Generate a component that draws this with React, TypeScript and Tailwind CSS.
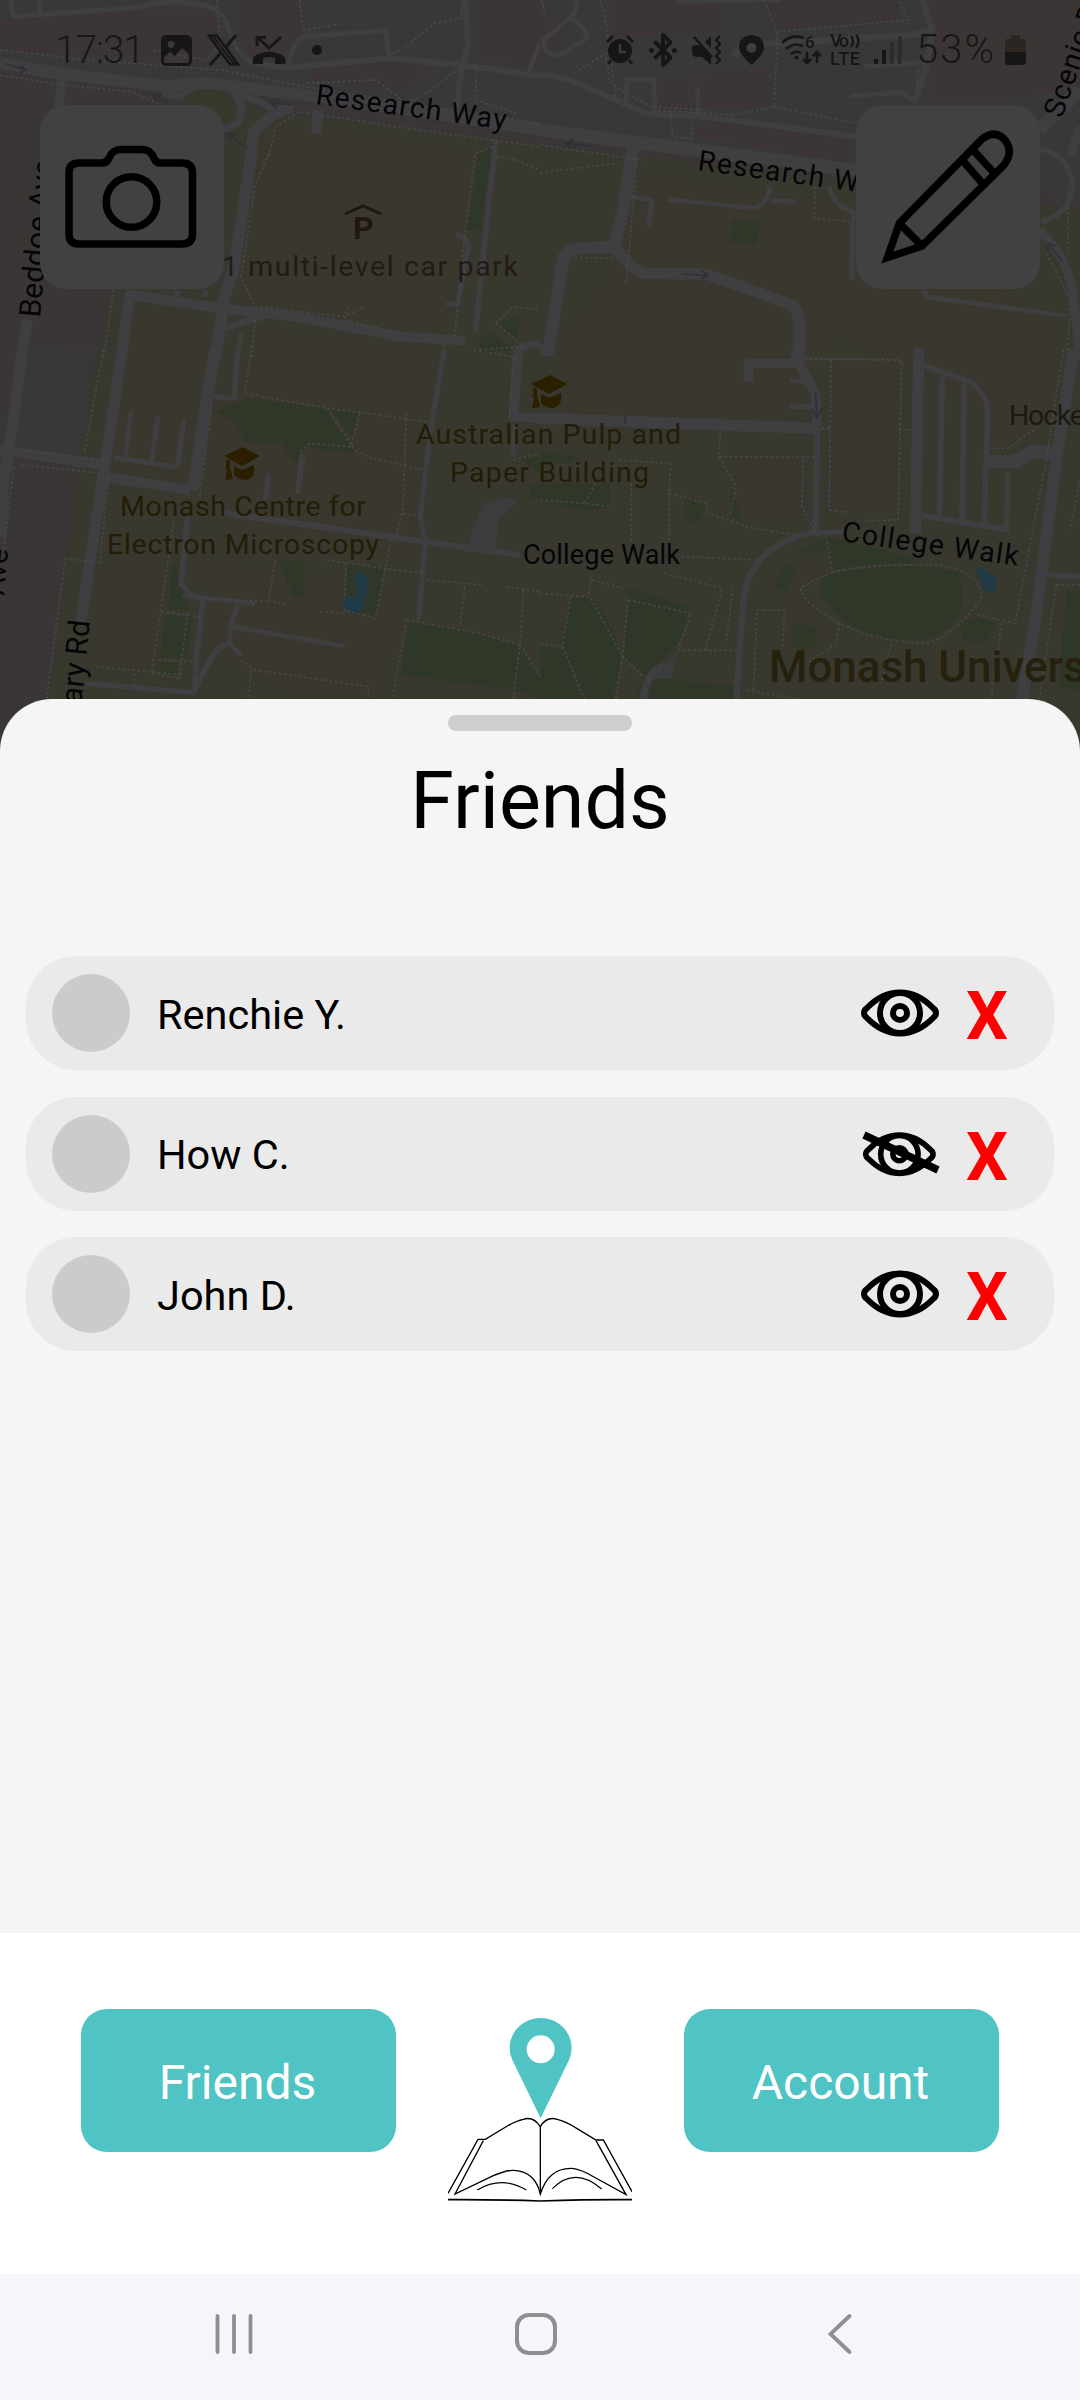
import type { ReactNode } from "react";
import { Bluetooth } from "lucide-react";

type Friend = { name: string; visible: boolean };

const friends: Friend[] = [
  { name: "Renchie Y.", visible: true },
  { name: "How C.", visible: false },
  { name: "John D.", visible: true },
];

type TileData = {
  transform: string;
  brown?: string[];
  green?: string[];
  water?: string[];
  roads: [string, number][];
  paths: string[];
  arrows?: string[];
};

const tiles: TileData[] = [
  {
    transform: "scale(.3444 .3333)",
    brown: [
      "M0 60L230 40V165L0 150z",
      "M230 30L620 30L650 130L560 200L230 160z",
      "M690 0H870L880 90L820 180L740 190L690 100z",
      "M1390 0H1568V200L1390 180z",
      "M900 200L1130 180L1260 200L1180 270L900 240z",
    ],
    green: [
      "M1390 470L1430 430L1395 690L1355 690z",
      "M1390 1020L1430 1000L1490 1050L1400 1058z",
      "M1450 970L1510 950L1500 1020z",
    ],
    roads: [
      ["M30 0L38 50L400 22Q500 -8 600 18Q650 30 665 90Q680 150 720 180", 14],
      ["M115 0V40", 12],
      ["M0 190L180 222L480 258L600 250L920 290L1568 388", 36],
      ["M180 240L170 320", 26],
      ["M470 280Q540 300 550 270Q600 240 660 260Q720 300 690 370Q640 400 600 380", 22],
      ["M850 320Q780 340 735 400L725 500L680 800L650 900L625 1080", 34],
      ["M700 290Q760 300 790 330", 22],
      ["M925 330L918 400", 30],
      ["M840 190Q850 110 900 108L1120 92L1130 170", 14],
      ["M720 180Q780 205 860 200L1130 175L1340 195L1568 228", 18],
      ["M1350 0L1360 140L1340 200L1325 330", 18],
      ["M1568 130L1535 215", 14],
      ["M80 960L60 1080", 32],
      ["M380 870L350 1080", 32],
      ["M380 885L640 925L860 950L1160 1010L1350 1022", 30],
      ["M515 870V890M595 870V890", 16],
      ["M650 985L760 950", 20],
      ["M700 1000L690 1080", 14],
      ["M1325 706Q1358 706 1360 740L1330 912H1295", 14],
      ["M1440 420L1420 600L1380 1000", 16],
      ["M1500 1080Q1500 1035 1568 1030", 22],
    ],
    paths: [
      "M0 150L250 180L640 210L860 255L1180 310L1568 370",
      "M0 225L180 255L380 275L460 310",
      "M780 470L800 380L870 335L1180 385L1568 440",
      "M780 460L740 560L700 830L740 920L1000 950L1060 920",
      "M870 0L880 90L1000 70",
      "M630 0L640 130L600 180L440 150",
      "M1100 180L1180 140L1260 70L1340 55V0",
      "M890 250L1090 240L1180 310L1240 280L1340 200",
      "M1385 210L1380 300L1500 340",
      "M1430 440L1380 460L1350 700L1320 1010",
      "M1440 470L1500 480L1568 510",
      "M1010 920L1000 960L1160 1000",
      "M1440 970L1490 920L1568 930M1440 970L1520 1040L1390 1050",
      "M330 870L300 1080M740 960L730 1080M1290 1030V1080",
    ],
    arrows: [
      "M10 190L75 210M58 196L76 210L56 218",
      "M492 312L445 282M470 282L445 282L452 302",
      "M850 314L785 308M808 298L785 308L802 324",
      "M718 446L660 400M684 402L660 400L668 424",
    ],
  },
  {
    transform: "translate(540 0) scale(.3444 .3333)",
    brown: [
      "M205 0H530V100L200 110z",
      "M660 0H1050V60L680 90z",
      "M1140 0H1568V260L1300 310L1130 300z",
      "M0 40L90 60L60 140L0 150z",
      "M460 360L910 410V490L450 410z",
      "M330 240L660 200L670 320L340 330z",
    ],
    green: ["M560 660H640L630 735L555 725z"],
    roads: [
      ["M105 0Q110 40 85 55L10 120Q10 170 60 165L135 115Q140 90 90 50", 14],
      ["M395 5L700 0", 12],
      ["M0 225Q60 225 120 255L310 340L480 350L920 410", 18],
      ["M0 390L300 430L920 512", 40],
      ["M250 310L252 238H330L333 330M458 262L460 345", 14],
      ["M560 170Q580 130 700 130L1080 105L1140 90", 20],
      ["M1110 0L1140 90Q1120 230 1085 310", 18],
      ["M940 200L1140 185M900 288L1050 278L1085 300", 14],
      ["M270 440L240 640L215 740L110 745Q70 750 65 790L25 1050H0", 36],
      ["M215 740Q270 810 300 820L480 822L720 910Q750 920 752 960V1080", 34],
      ["M260 590L325 600L315 680", 14],
      ["M370 598L510 612L625 625Q660 610 668 560M668 602L740 604", 14],
      ["M840 560Q850 620 910 635L905 840", 14],
      ["M1115 870L1120 890L1530 948", 14],
      ["M1450 390L1568 270", 40],
      ["M1450 445Q1545 470 1545 560Q1545 640 1455 665", 16],
      ["M1568 380L1540 470M1450 690Q1540 780 1550 900L1568 1080", 26],
      ["M1100 1045V1080", 26],
      ["M600 1080H770", 10],
    ],
    paths: [
      "M5 0L15 50",
      "M175 0L190 60L205 180L220 300",
      "M650 0L690 100L680 320L560 345L330 330",
      "M680 320L920 370",
      "M690 95L1070 60L1040 0",
      "M380 340L385 410L440 415V360",
      "M100 220L190 160L205 250L320 320L490 330",
      "M0 435L300 480M0 518L220 490",
      "M280 480L260 740L250 850",
      "M100 772L215 775",
      "M800 560L795 655L900 665",
      "M1100 210L1090 290",
      "M1530 560L1535 760",
      "M1470 760L1540 900L1530 1080",
      "M780 1078H1040",
    ],
    arrows: [
      "M150 438L75 430M98 418L75 430L95 444",
      "M412 822L488 826M468 812L488 826L466 838",
      "M1518 786L1475 730M1500 738L1475 730L1474 756",
    ],
  },
  {
    transform: "translate(0 350) scale(.3444 .3333)",
    brown: [],
    green: [
      "M625 185L720 145L950 175L980 240L1040 290L1020 310L890 290L860 340L830 310L820 280L710 275L680 215z",
      "M960 175L1040 190L1020 260z",
      "M1190 815L1390 850L1510 885L1568 980V1047L1500 1020L1165 975z",
      "M810 630H885L880 740H850z",
      "M500 640H530L520 700L550 780H490z",
      "M480 795L560 800L540 925L465 920z",
      "M460 935L520 940L510 980L455 970z",
      "M1010 640L1115 655L1095 800L1000 780z",
      "M1540 410L1568 400V450L1540 440z",
      "M1505 320H1568V370z",
    ],
    water: ["M1040 665Q1075 670 1065 730Q1050 760 1055 780L1035 790L998 775Q990 740 1020 735L1030 745Q1045 720 1035 705Q1020 700 1040 665z"],
    roads: [
      ["M65 0L35 240L10 400L0 560", 32],
      ["M0 300L300 345L300 380L550 420", 30],
      ["M355 0L305 340L260 640L235 820", 32],
      ["M625 0L600 150L560 420", 34],
      ["M690 0L680 145L620 140", 14],
      ["M380 185L365 315M458 200L440 340M535 205L515 350M330 322L515 352", 14],
      ["M778 370L772 450M880 310L865 430", 16],
      ["M650 490L860 520L1230 575L1510 615", 18],
      ["M1290 0L1250 240L1220 500L1235 575L1215 810", 14],
      ["M1505 0L1490 200L1568 205", 28],
      ["M1495 220L1490 320", 14],
      ["M545 500L525 700L560 740L590 750L570 920L565 1030", 16],
      ["M530 735L740 762M690 765L668 830V880L700 918M670 830L1000 888", 14],
      ["M665 880Q630 890 610 930L560 1028L250 1000", 16],
    ],
    paths: [
      "M300 0L245 310",
      "M55 300L310 330M60 345L300 370M40 350L10 600",
      "M730 0L710 130L950 175L1030 185L1240 215",
      "M950 175L1030 300L1080 325L1230 360",
      "M1045 190L1020 290L900 280L875 300L860 430",
      "M1180 190L1170 480L1150 560M1170 490L1230 500",
      "M615 160L580 440M315 380L290 640L190 625L135 1047",
      "M505 510L440 970L520 985L545 790M470 785L580 800M460 930L560 935",
      "M800 630L780 750L830 765M590 745L780 755",
      "M950 630L1110 655L1230 670M1005 640L1000 780L1090 805L1135 570M930 785L1000 790",
      "M1240 690L1400 705M1350 710L1335 830M1520 720L1510 880M1470 710L1568 725",
      "M1180 810L1140 1047M1180 810L1390 850L1510 885L1490 1047M1510 885L1568 980",
      "M700 930L740 960L1070 1010V1047M730 960L720 1047M280 950L530 975M390 970V1010",
      "M1375 0L1490 20L1480 200M1490 330L1568 310",
    ],
  },
  {
    transform: "translate(540 350) scale(.3444 .3333)",
    brown: [
      "M850 30H1040L1035 480L845 475z",
      "M1110 0H1480L1380 240L1310 300V170L1250 95L1110 45z",
      "M560 330L760 325L770 500L590 510z",
      "M710 640L860 660L750 700L790 800L860 840L790 900L710 880z",
    ],
    green: [
      "M0 310L110 320L90 340H0z",
      "M0 400L200 400L205 470L130 485L0 450z",
      "M420 440L480 460L460 520L420 510z",
      "M90 740L145 740Q220 830 235 920Q225 1010 210 1047H130L60 890z",
      "M260 750L430 795L400 880L310 980L240 915z",
      "M250 710L435 770L420 795L255 745z",
      "M330 980L570 1010V1047H280L300 985z",
      "M0 890L65 900L120 1047H0z",
      "M820 680Q960 640 1100 650L1215 665Q1240 740 1215 800Q1170 870 1080 870Q960 870 890 820Q790 730 820 680z",
      "M830 560L1080 620L1100 640Q950 635 850 660L830 600L740 610z",
      "M710 640L750 655L710 728L680 712z",
      "M730 830Q770 810 805 840L800 890Q760 905 730 885z",
      "M1220 820Q1270 790 1320 820L1300 875H1230z",
      "M1530 720L1568 725V1020L1505 1010z",
      "M555 420L585 510L550 500z",
    ],
    water: ["M1262 662L1280 650L1330 690L1322 722L1290 725L1285 695z"],
    roads: [
      ["M0 205L800 235", 34],
      ["M605 95V40H750L740 0M750 40L800 130L805 230", 28],
      ["M725 90L790 100M725 170H800", 14],
      ["M805 235L800 545Q600 590 590 760L570 1047", 18],
      ["M780 550L880 545", 16],
      ["M1100 0L1090 550", 32],
      ["M1110 45L1250 95Q1300 140 1300 180L1290 530M1168 75L1160 500M1232 95L1225 515M1358 370L1355 540L1110 498", 16],
      ["M1300 335H1380L1430 305L1510 310", 40],
      ["M1550 0L1500 320L1440 800L1400 1047", 34],
      ["M1470 675L1568 680", 16],
      ["M300 1047Q310 960 360 950", 22],
    ],
    paths: [
      "M770 25L1050 32L1040 510L940 512M845 30L840 480L895 487M840 235H800",
      "M525 230L520 320L800 322M520 320L570 410L550 500",
      "M765 330L760 470L800 550",
      "M230 330L380 340L375 430L480 460L490 490L600 530L740 555M265 400V580M375 430V570",
      "M0 450L130 460L205 470M130 460L160 400",
      "M410 620L640 630M360 670L530 715L480 900M400 900L580 902M560 715L540 880",
      "M0 730L145 742L240 920L300 980M90 740L65 890L0 880M65 890L130 1047M240 920L220 1047M255 750L240 920M255 750L440 790L400 900",
      "M150 680L140 740M150 690L240 715",
      "M830 560L850 665Q1000 640 1160 645Q1290 670 1280 750Q1200 860 1120 880Q1000 880 870 820Q740 740 760 710L850 665",
      "M620 1020L630 780H710L705 890M870 820L860 880L760 950M1270 795L1380 820L1420 600",
      "M1520 0L1470 330L1420 600M1500 700L1450 1047M1500 705H1568M1310 295H1360L1440 235M1040 240H1090",
      "M1568 390L1540 540M1340 820L1310 1047M600 1020L740 1047M1020 880L990 1000",
    ],
    arrows: ["M800 125L804 200M790 178L804 204L818 176", "M247 195V222"],
  },
];

type LabelProps = {
  x: number;
  y: number;
  rotate?: number;
  length?: number;
  size?: number;
  className?: string;
  anchor?: "start" | "end";
  children: ReactNode;
};

function Label({
  x,
  y,
  rotate = 0,
  length,
  size = 28.5,
  className = "fill-[#050507]",
  anchor = "start",
  children,
}: LabelProps) {
  return (
    <text
      x={x}
      y={y}
      fontSize={size}
      textAnchor={anchor}
      textLength={length}
      transform={`rotate(${rotate} ${x} ${y})`}
      className={className}
    >
      {children}
    </text>
  );
}

function GraduationCap({ x, y }: { x: number; y: number }) {
  return (
    <g transform={`translate(${x} ${y})`} className="fill-[#2b1f00]">
      <path d="M0 9L19 0L36 9L18 19z" />
      <path d="M10 19L18 23L30 18Q32 30 23 33Q14 33 10 28z" />
      <path d="M2 13H6V20L9 32L1 33L3 23Q0 21 2 19z" />
    </g>
  );
}

function CampusMap() {
  return (
    <svg
      viewBox="0 0 1080 760"
      className="absolute inset-x-0 top-0 h-[760px] w-[1080px] font-['Roboto',sans-serif]"
      fill="none"
    >
      <rect width="1080" height="760" fill="#3a3635" />
      <path d="M0 0H1080V195L860 178L540 132L310 100L0 65z" fill="#393838" />
      <path d="M225 105L540 145L860 182L1080 210V760H40L85 420L112 285H225z" fill="#38382f" />
      <path d="M20 345L90 350L80 470L18 450z" fill="#393838" />
      <path d="M265 122L480 155L440 330L245 305z" fill="#3a372e" />
      <path d="M130 310L205 320L185 480L110 465z" fill="#3a372e" />
      <path d="M255 330L430 350L415 560L210 520L215 400L245 390z" fill="#3a372e" />
      <path d="M110 555L170 560L150 670L90 660zM200 560L400 590L370 740L215 650z" fill="#3a372e" />
      <path d="M630 175L840 205L1060 320L1040 450L920 370L830 330L800 410L560 415L560 350L630 250z" fill="#3a372e" />

      {tiles.map((tile) => (
        <g key={tile.transform} transform={tile.transform} strokeLinejoin="round">
          {tile.brown?.map((d) => (
            <path key={d} d={d} fill={tile.transform.includes("350") ? "#3a372e" : "#3b3635"} />
          ))}
          {tile.green?.map((d) => (
            <path key={d} d={d} fill="#2f3728" />
          ))}
          {tile.roads.map(([d, width]) => (
            <path key={d} d={d} stroke="#3f3f41" strokeWidth={width} />
          ))}
          {tile.paths.map((d) => (
            <path key={d} d={d} stroke="#46474a" strokeWidth="5" strokeDasharray="8 7" />
          ))}
          {tile.water?.map((d) => (
            <path key={d} d={d} fill="#203a47" />
          ))}
          {tile.arrows?.map((d) => (
            <path key={d} d={d} stroke="#30303a" strokeWidth="5" />
          ))}
        </g>
      ))}

      {/* roundabout island and plazas */}
      <path d="M185 96Q205 82 228 96Q242 112 222 125H185z" fill="#38372b" />
      <path d="M482 505L502 497L520 500L498 520L496 552H465z" fill="#3b3c3e" />
      <path d="M652 680L678 650L672 678z" fill="#3b3c3e" />

      <Label x={315} y={104} rotate={7.6} length={192}>Research Way</Label>
      <Label x={697} y={170} rotate={7.8} length={193}>Research Way</Label>
      <Label x={40} y={318} rotate={-85} size={30}>Beddoe Ave</Label>
      <Label x={4} y={596} rotate={-85}>Ave</Label>
      <Label x={90} y={621} rotate={-84} anchor="end" size={30}>Library Rd</Label>
      <Label x={1062} y={119} rotate={-71} size={29} length={128}>Scenic Dr</Label>
      <Label x={523} y={564} length={157} size={27}>College Walk</Label>
      <Label x={841} y={541} rotate={8} length={178}>College Walk</Label>

      <path d="M345 214L363 206L381 214" stroke="#211613" strokeWidth="3" />
      <Label x={353} y={239} size={32} className="fill-[#211613] font-bold">P</Label>
      <Label x={518} y={276} length={318} anchor="end" className="fill-[#211a16]">N1 multi-level car park</Label>
      <Label x={1009} y={425} length={88} className="fill-[#1c1813]">Hockey</Label>

      <GraduationCap x={224} y={447} />
      <GraduationCap x={531} y={375} />
      <Label x={120} y={516} length={246} className="fill-[#231c07] font-normal">Monash Centre for</Label>
      <Label x={107} y={554} length={272} className="fill-[#231c07] font-normal">Electron Microscopy</Label>
      <Label x={416} y={444} length={265} className="fill-[#231c07] font-normal">Australian Pulp and</Label>
      <Label x={450} y={482} length={199} className="fill-[#231c07] font-normal">Paper Building</Label>
      <Label x={769} y={682} length={364} size={44} className="fill-[#27200d] font-medium">Monash University</Label>
    </svg>
  );
}

function StatusBar() {
  return (
    <div className="flex h-[100px] items-center justify-between pr-[54px] pl-[55px] text-[#161616]">
      <div className="flex items-center">
        <span className="w-[88px] text-[39px] leading-none font-light tracking-[-1.2px]">17:31</span>
        <svg viewBox="0 0 31 31" className="ml-[18px] h-[31px] w-[31px]" fill="none">
          <rect x="1.5" y="1.5" width="28" height="28" rx="4" stroke="currentColor" strokeWidth="3" />
          <path d="M2 2H29V20L21 13L14 21L9 17L2 23z" fill="currentColor" />
          <circle cx="10" cy="9.5" r="3.4" fill="#3a3735" />
        </svg>
        <svg viewBox="0 0 33 32" className="ml-[15px] h-8 w-[33px]" fill="none" stroke="currentColor">
          <path d="M2 1.5H10L31 30.5H23z" strokeWidth="2.6" />
          <path d="M29 1L18.500 13.500M14 18.500L3 31" strokeWidth="2.8" />
          <path d="M6 2L27 30" strokeWidth="2" />
        </svg>
        <svg viewBox="0 0 34 32" className="ml-[12px] h-8 w-[34px]" fill="none">
          <path d="M5 3V12M4 3.500H14M6 4L17 14L29 3" stroke="currentColor" strokeWidth="3" />
          <path d="M1 30Q-1 23 6 20Q17 15 28 20Q35 23 33 30H23V24Q17 22 11 24V30z" fill="currentColor" />
        </svg>
        <span className="ml-[26px] h-2.5 w-2.5 rounded-full bg-[#161616]" />
      </div>

      <div className="flex items-center">
        <svg viewBox="0 0 28 30" className="h-[30px] w-7" fill="none" stroke="currentColor">
          <circle cx="14" cy="16" r="12" fill="currentColor" stroke="none" />
          <path d="M1 7L7 1M27 7L21 1M5 25L2 29M23 25L26 29" strokeWidth="2.6" />
          <path d="M14 9V17H20" stroke="#3c3938" strokeWidth="2.4" />
        </svg>
        <span className="relative ml-[15px] flex w-7 justify-center">
          <Bluetooth size={36} strokeWidth={2.6} className="shrink-0" />
          <span className="absolute top-4 left-0 h-[5px] w-[5px] rounded-full bg-[#161616]" />
          <span className="absolute top-4 right-0 h-[5px] w-[5px] rounded-full bg-[#161616]" />
        </span>
        <svg viewBox="0 0 30 30" className="ml-[15px] h-[30px] w-[30px]" fill="none">
          <path d="M0 13Q0 10 4 10H8L19 21V30L10 22H4Q0 21 0 17zM13 7L19 1V13z" fill="currentColor" />
          <path d="M2 2L20 22" stroke="currentColor" strokeWidth="2.4" />
          <path d="M28 1L24 5L28 9L24 13L28 17L24 21L28 25L24 29" stroke="currentColor" strokeWidth="2.4" />
        </svg>
        <svg viewBox="0 0 25 30" className="ml-[17px] h-[30px] w-[25px]" fill="currentColor" fillRule="evenodd">
          <path d="M12.500 0Q25 1 25 13Q24 20 12.500 30Q1 20 0 13Q0 1 12.500 0zM12.500 8A5 5 0 1 0 12.500 18A5 5 0 1 0 12.500 8z" />
        </svg>
        <svg viewBox="0 0 40 32" className="ml-[17px] h-8 w-10" fill="none" stroke="currentColor" strokeWidth="2.6">
          <path d="M1 9Q11 -1 23 4M5 15Q13 8 22 12M10 20Q15 16 20 19" />
          <circle cx="15.500" cy="23.500" r="2" fill="currentColor" stroke="none" />
          <path d="M26 18V29M22 25L26 29L30 25M36 29V18M32 22L36 18L40 22" />
          <text x="24" y="14" fontSize="17" fill="currentColor" stroke="none" className="font-medium">6</text>
        </svg>
        <svg viewBox="0 0 32 32" className="ml-[9px] h-8 w-8" fill="currentColor">
          <text x="0" y="13" fontSize="18" textLength="19" className="font-medium">Vo</text>
          <text x="0" y="31" fontSize="18" textLength="30" className="font-medium">LTE</text>
          <path d="M21 2Q25 7 21 13M26 1Q31 7 26 14" fill="none" stroke="currentColor" strokeWidth="2.2" />
        </svg>
        <svg viewBox="0 0 28 30" className="ml-[12px] h-[30px] w-7" fill="currentColor">
          <rect x="0" y="24" width="4" height="5" />
          <rect x="8" y="15" width="4" height="14" />
          <rect x="16" y="7" width="3.500" height="22" fill="#2b2b2b" />
          <rect x="24" y="1" width="3.500" height="28" fill="#2b2b2b" />
        </svg>
        <span className="ml-[14px] w-[85px] text-[40px] leading-none font-light tracking-[2px]">53%</span>
        <svg viewBox="0 0 21 30" className="ml-[4px] h-[30px] w-[21px]">
          <path d="M6 0H15V4H19Q21 4 21 7V17H0V7Q0 4 2 4H6z" fill="#2c2623" />
          <path d="M0 17H21V27Q21 30 18 30H3Q0 30 0 27z" fill="currentColor" />
        </svg>
      </div>
    </div>
  );
}

function MapButton({ label, children }: { label: string; children: ReactNode }) {
  return (
    <button
      type="button"
      aria-label={label}
      className="flex h-[184px] w-[184px] items-center justify-center rounded-[26px] bg-[#414141] text-black"
    >
      <svg viewBox="0 0 184 184" className="h-full w-full" fill="none" stroke="currentColor" strokeWidth="7.5">
        {children}
      </svg>
    </button>
  );
}

function EyeIcon({ off = false }: { off?: boolean }) {
  return (
    <svg viewBox="0 0 80 54" className="h-[54px] w-20" fill="none" stroke="#000">
      <g transform={off ? "translate(2 2) scale(.935)" : undefined} strokeWidth="6">
        <path d="M4 27Q4 24 7 22Q22 6.500 40 6.500T73 22Q76 24 76 27T73 32Q58 47.500 40 47.500T7 32Q4 30 4 27z" />
        <circle cx="40" cy="27" r="20" />
        <circle cx="40" cy="27" r="7" />
      </g>
      {off && <path d="M4 8L78 43" strokeWidth="7.500" />}
    </svg>
  );
}

function FriendRow({ name, visible }: Friend) {
  return (
    <li className="flex h-[114px] items-center rounded-[50px] bg-[#eaeaea] pr-[46px] pl-[26px]">
      <span className="h-[78px] w-[78px] rounded-full bg-[#cbcbcb]" />
      <span className="ml-[27px] flex-1 pt-1 text-[41.500px] text-black">{name}</span>
      <button type="button" aria-label={visible ? "Hide location" : "Show location"} className="-ml-px">
        <EyeIcon off={!visible} />
      </button>
      <button type="button" className="ml-[26px] pt-2 text-[66px] leading-none font-bold text-[#ff0000]">
        X
      </button>
    </li>
  );
}

function Logo() {
  return (
    <svg viewBox="84 84 552 552" className="mt-[9px] h-[184px] w-[184px]" fill="none">
      <path
        d="M362 385L277 210Q269 193 269 174C269 125 310 84 362 84S455 125 455 174Q455 193 447 210zM362 136A42 42 0 1 0 362 220A42 42 0 1 0 362 136z"
        fill="#50c3c4"
        fillRule="evenodd"
      />
      <g stroke="#000" strokeWidth="4">
        <path d="M361 612V410Q340 378 310 388Q290 392 262 408L196 448H174L84 610" />
        <path d="M361 410Q380 378 412 388Q440 395 470 415L528 450H550L636 605" />
        <path d="M190 452L105 612L220 557Q260 540 280 541Q345 543 361 612Q385 535 452 535Q472 535 500 549L618 614L528 452" />
        <path d="M172 600Q245 556 319 600M397 596Q465 528 545 597" strokeWidth="3.500" />
        <path d="M84 629Q200 628 360 633Q520 628 636 629" strokeWidth="5" />
      </g>
    </svg>
  );
}

function TabButton({ children }: { children: ReactNode }) {
  return (
    <button
      type="button"
      className="h-[143px] w-[315px] rounded-[26px] bg-[#50c3c4] pt-[5px] pr-0.5 text-[48px] text-white"
    >
      {children}
    </button>
  );
}

export default function App() {
  return (
    <div className="relative flex h-[2400px] w-[1080px] flex-col overflow-hidden bg-[#3a3735] font-['Roboto',sans-serif]">
      <CampusMap />

      <header className="relative h-[699px] shrink-0">
        <StatusBar />
        <div className="flex justify-between px-10 pt-[5px]">
          <MapButton label="Camera">
            <path d="M39 58H62Q67 58 69 53Q73 44.500 80 44.500H103Q110 44.500 114 53Q116 58 120 58H142Q152.500 58 152.500 68V129Q152.500 139 142 139H39Q29 139 29 129V68Q29 58 39 58z" />
            <circle cx="91.500" cy="97" r="25.300" />
          </MapButton>
          <MapButton label="Edit">
            <path d="M31.500 152.500L43.500 118L126 34Q139 24 149 35Q158 47 148 60L66 141z" />
            <path d="M107 56L127 79M118 46L138 68M44 119L66 141" />
          </MapButton>
        </div>
      </header>

      <main className="relative flex h-[1234px] shrink-0 flex-col items-center rounded-t-[52px] bg-[#f5f5f5] pt-4">
        <span className="h-4 w-[184px] rounded-lg bg-[#cecece]" />
        <h1 className="mt-[17px] text-[79px] leading-[106px] text-black">Friends</h1>
        <ul className="mt-[102px] flex w-full flex-col gap-[26.500px] px-[26px]">
          {friends.map((friend) => (
            <FriendRow key={friend.name} {...friend} />
          ))}
        </ul>
      </main>

      <nav className="relative flex h-[341px] shrink-0 items-start justify-between bg-white px-[81px] pt-[76px]">
        <TabButton>Friends</TabButton>
        <Logo />
        <TabButton>Account</TabButton>
      </nav>

      <footer className="relative flex h-[126px] shrink-0 items-start bg-[#f6f6fa] pt-[39px] pl-[215px] text-[#8f8f8f]">
        <svg viewBox="0 0 38 42" className="h-[42px] w-[38px]" stroke="currentColor" strokeWidth="3.800" strokeLinecap="round">
          <path d="M2.500 3V39M19 3V39M35.500 3V39" />
        </svg>
        <span className="ml-[262px] h-[42px] w-[42px] rounded-[14px] border-4 border-[#8f8f8f]" />
        <svg viewBox="0 0 24 42" className="ml-[271px] h-[42px] w-6" fill="none" stroke="currentColor" strokeWidth="3.800" strokeLinecap="round">
          <path d="M21.500 3L2.500 21L21.500 39" />
        </svg>
      </footer>
    </div>
  );
}
